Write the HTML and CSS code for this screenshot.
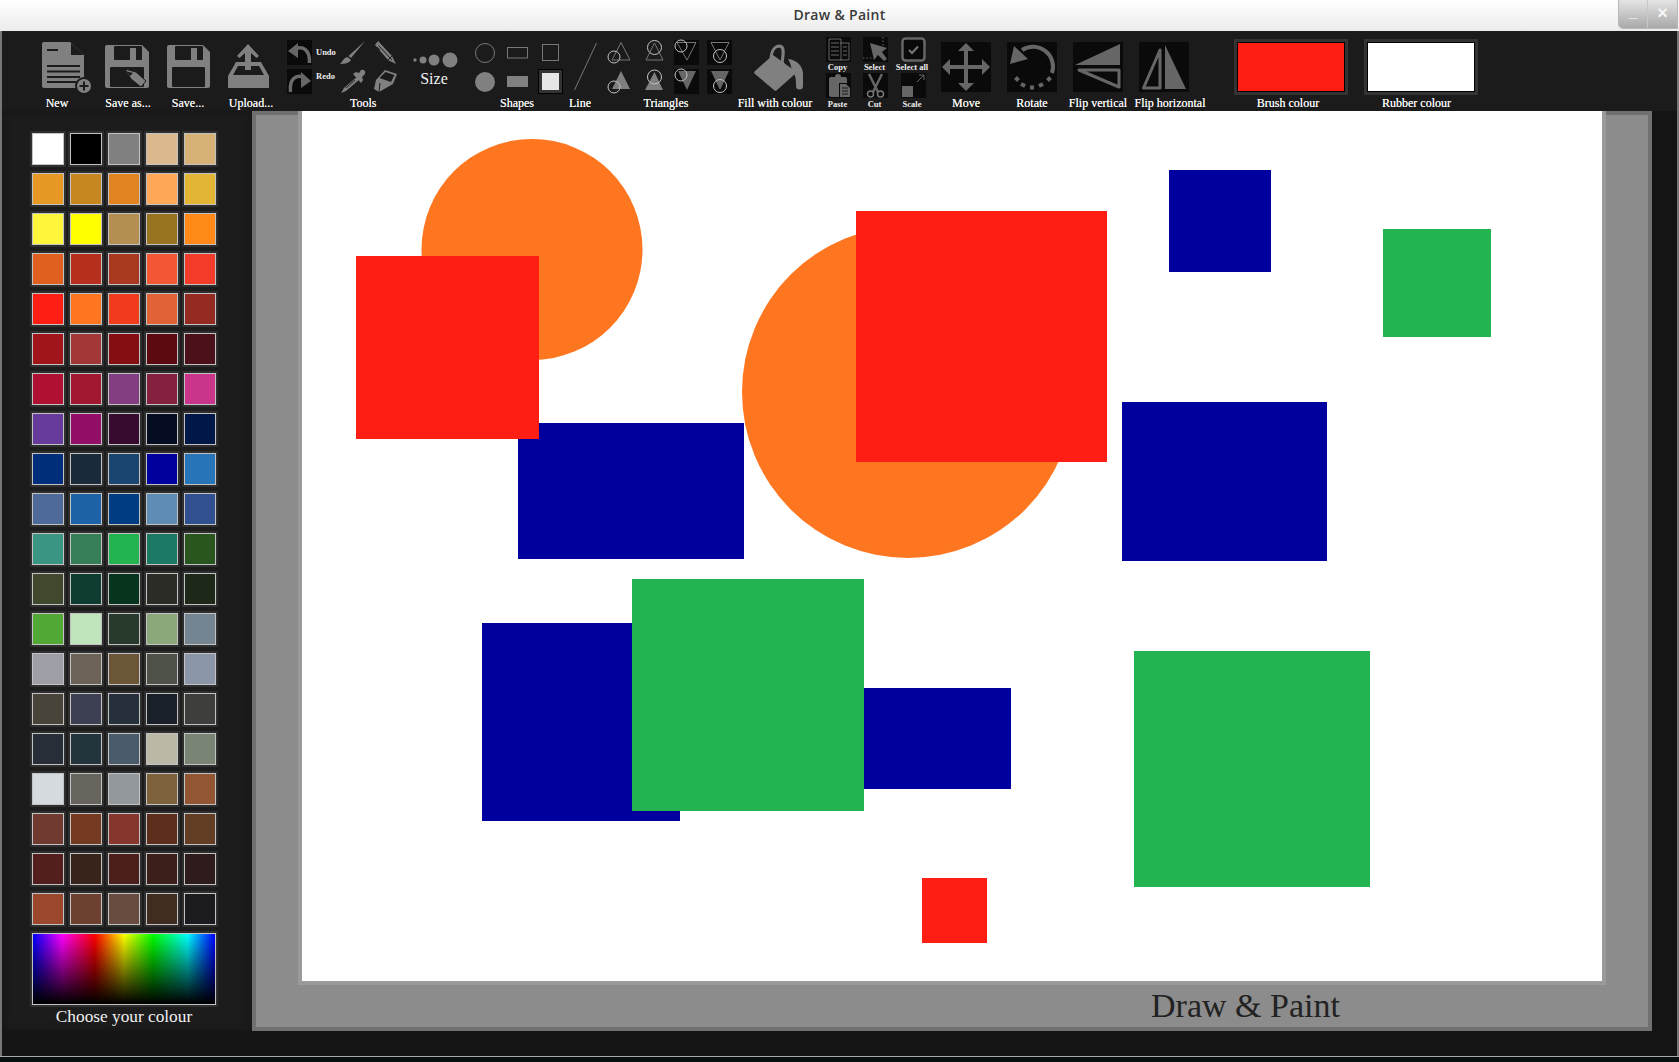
FILE: index.html
```html
<!DOCTYPE html>
<html lang="en">
<head>
<meta charset="utf-8">
<title>Draw &amp; Paint</title>
<link rel="stylesheet" href="styles.css">
</head>
<body>
<div class="window">
  <header class="titlebar">
    <span class="title">Draw &amp; Paint</span>
    <div class="winbtns"><span class="winbtn min">_</span><span class="winbtn close">×</span></div>
  </header>
  <div class="frame">
    <nav class="toolbar">
      <div class="tool g-new">
        <svg class="ico" width="70" height="60" viewBox="22 37 70 60">
          <path class="i" d="M44 42H70L84 55V86a2 2 0 0 1-2 2H44a2 2 0 0 1-2-2V44a2 2 0 0 1 2-2Z"/>
          <path class="cut" d="M71 43V55H84Z"/>
          <path class="dline" d="M47 50H58M47 66H80M47 71.500H80M47 77H80M47 82H80"/>
          <circle class="ring" cx="84" cy="86" r="8"/>
          <path class="badge" d="M79.500 86H88.500M84 81.500V90.500"/>
        </svg>
        <span class="label">New</span>
      </div>
      <div class="tool g-saveas">
        <svg class="ico" width="62" height="60" viewBox="97 37 62 60">
          <path class="i" d="M107 45H142L149 52V86a2 2 0 0 1-2 2H107a2 2 0 0 1-2-2V47a2 2 0 0 1 2-2Z"/>
          <rect class="cut" x="114" y="46" width="28" height="14" rx="1"/>
          <rect class="i" x="130" y="48" width="6" height="12"/>
          <rect class="cut" x="110" y="67" width="34" height="20" rx="1"/>
          <path class="i outl" d="M125 69L136 72L146 81L141 87L131 79Z"/>
          <path class="cut" d="M127 71.500L133 73L130 76Z"/>
        </svg>
        <span class="label">Save as...</span>
      </div>
      <div class="tool g-save">
        <svg class="ico" width="58" height="60" viewBox="159 37 58 60">
          <path class="i" d="M169 45H203L210 52V86a2 2 0 0 1-2 2H169a2 2 0 0 1-2-2V47a2 2 0 0 1 2-2Z"/>
          <rect class="cut" x="175" y="46" width="28" height="14" rx="1"/>
          <rect class="i" x="191" y="48" width="6" height="12"/>
          <rect class="cut" x="172" y="67" width="33" height="20" rx="1"/>
        </svg>
        <span class="label">Save...</span>
      </div>
      <div class="tool g-upload">
        <svg class="ico" width="68" height="60" viewBox="217 37 68 60">
          <path class="i" fill-rule="evenodd" d="M236 62H245V66H238L233 75H264L259 66H251V62H261L269 76V88H228V76Z"/>
          <path class="i" d="M248 44L259 56L256.500 58L251 53V70H245V53L239.500 58L237 56Z"/>
        </svg>
        <span class="label">Upload...</span>
      </div>
      <div class="tool g-tools">
        <div class="tools-top">
          <div class="undo-col">
            <div class="undo-row">
              <svg width="25" height="25" viewBox="287 40 25 25">
                <rect class="box" x="287" y="40" width="25" height="25"/>
                <path class="arc" d="M294 49.500C303 45 310 50 309.500 63"/>
                <path class="g2" d="M288 51L298 43V58Z"/>
              </svg>
              <span class="mini">Undo</span>
            </div>
            <div class="undo-row">
              <svg width="25" height="25" viewBox="287 69 25 25">
                <rect class="box" x="287" y="69" width="25" height="25"/>
                <path class="arc" d="M290.500 92C289 79 296 74 304 77.500"/>
                <path class="g2" d="M311 81L301 72V88Z"/>
              </svg>
              <span class="mini up">Redo</span>
            </div>
          </div>
          <svg class="ico" width="60" height="60" viewBox="338 37 60 60">
            <path class="i" d="M365 41L351 58L348.500 56Z"/>
            <path class="i" d="M347.500 57L351 60C349 63 345 64 340 64C342.500 62 343 58 347.500 57Z"/>
            <path class="i" d="M375 45L378 41L392 56L396 64L388 60Z"/>
            <path class="dthin" d="M380 50L377 47M378.500 45.500L392 60M388 60L392 56"/>
            <path class="i" d="M358 76L344 88L341 93L346 91L360 79L358 76Z"/>
            <path class="dthin" d="M355 80L346 88"/>
            <path class="i" d="M353 74L356 72L359 73L361 70A3 3 0 0 1 365 74L362 77L363 80L361 83Z"/>
            <path class="i" d="M385 70L397 74L393 84L379 92L374 89L376 80Z"/>
            <path class="cut" d="M385.500 72L394.500 75L391 82L379.500 78Z"/>
            <path class="dthin" d="M379 92L380 83"/>
          </svg>
        </div>
        <span class="label tools-label">Tools</span>
      </div>
      <div class="tool g-size">
        <svg width="58" height="32" viewBox="405 37 58 32">
          <circle class="i" cx="415" cy="60" r="1.700"/>
          <circle class="i" cx="423" cy="60" r="3.500"/>
          <circle class="i" cx="434" cy="60" r="5.500"/>
          <circle class="i" cx="450" cy="60" r="7.500"/>
        </svg>
        <span class="size-text">Size</span>
      </div>
      <div class="tool g-shapes">
        <svg class="ico" width="89" height="60" viewBox="474 37 89 60">
          <circle class="line" cx="485" cy="53" r="9.500"/>
          <circle class="i" cx="485" cy="82" r="10"/>
          <rect class="line" x="507.500" y="47.500" width="20" height="10.500"/>
          <rect class="i" x="507" y="76" width="21" height="11"/>
          <rect class="line" x="542.500" y="44.500" width="16" height="16"/>
          <rect class="sel" x="538.500" y="69.500" width="24" height="24"/>
          <rect class="sel-in" x="542" y="73" width="17" height="17"/>
        </svg>
        <span class="label shift-l">Shapes</span>
      </div>
      <div class="tool g-line">
        <svg class="ico" width="34" height="60" viewBox="563 37 34 60">
          <path class="line" d="M574.500 90L596.500 43"/>
        </svg>
        <span class="label">Line</span>
      </div>
      <div class="tool g-tri">
        <svg class="ico" width="130" height="60" viewBox="605 37 130 60">
          <rect class="box" x="674" y="40" width="25" height="25"/>
          <rect class="box" x="674" y="69" width="25" height="25"/>
          <rect class="box" x="707" y="40" width="25" height="25"/>
          <rect class="box" x="707" y="69" width="25" height="25"/>
          <path class="line" d="M621 42.500L612 60H630Z"/>
          <path class="i" d="M621 71L612 89H630Z"/>
          <circle class="hoop" cx="614" cy="57" r="6"/>
          <circle class="hoop" cx="614" cy="87" r="6"/>
          <path class="line" d="M654.500 43L646 60H663Z"/>
          <path class="i" d="M654.500 72L645 90H663Z"/>
          <circle class="hoop" cx="654.500" cy="47.500" r="7"/>
          <circle class="hoop" cx="654.500" cy="77" r="7"/>
          <path class="line" d="M677 42.500H696L687 60Z"/>
          <path class="g2" d="M678 71H696L687 90Z"/>
          <circle class="hoop" cx="681" cy="46" r="6"/>
          <circle class="hoop" cx="681" cy="75" r="6"/>
          <path class="line" d="M711 42.500H729L720 60Z"/>
          <path class="g2" d="M711 71H729L720 90Z"/>
          <circle class="hoop" cx="720" cy="56" r="6.500"/>
          <circle class="hoop" cx="720" cy="86" r="6.500"/>
        </svg>
        <span class="label shift-t">Triangles</span>
      </div>
      <div class="tool g-fill">
        <svg class="ico" width="80" height="60" viewBox="735 37 80 60">
          <path class="i" d="M755 71L773 55L795 71A2 2 0 0 1 795 74L777 90A2 2 0 0 1 774 90L755 74A2 2 0 0 1 755 71Z"/>
          <path class="arc-l" d="M771 60C771 49 776 46 780 46C785 47 783 56 782 63"/>
          <circle class="i" cx="782" cy="64" r="2.500"/>
          <path class="i" d="M788 59C797 60 803 66 803 74V86A3.500 3.500 0 0 1 796 86C796 80 796 75 792 71C791 66 790 62 788 59Z"/>
        </svg>
        <span class="label">Fill with colour</span>
      </div>
      <div class="tool g-clip">
        <div class="clip-grid">
          <div class="clip-cell">
            <svg width="25" height="25" viewBox="0 0 25 25">
              <rect class="box" width="25" height="25"/>
              <path class="line2" d="M14 6H23V23H14M3 2H15V23H3ZM5 6H13M5 10H13M5 14H13M5 18H13M17 10H21M17 14H21M17 18H21"/>
            </svg>
            <span class="mini">Copy</span>
          </div>
          <div class="clip-cell">
            <svg width="25" height="25" viewBox="0 0 25 25">
              <rect class="box" width="25" height="25"/>
              <path class="dots" d="M20 0V13M0 21H14"/>
              <path class="g2" d="M7 6L24 11L19 15L24 22L21 24L15 18L11 23Z"/>
            </svg>
            <span class="mini">Select</span>
          </div>
          <div class="clip-cell">
            <svg width="25" height="25" viewBox="0 0 25 25">
              <rect class="sa" x="1.500" y="1.500" width="22" height="22" rx="3"/>
              <path class="chk" d="M8 13L11 16L17 9.500"/>
            </svg>
            <span class="mini">Select all</span>
          </div>
          <div class="clip-cell">
            <svg width="25" height="25" viewBox="0 0 25 25">
              <rect class="box" width="25" height="25"/>
              <path class="g2" d="M3 6A2 2 0 0 1 5 4H9A3 3 0 0 1 15 4H19A2 2 0 0 1 21 6V10H13V24H5A2 2 0 0 1 3 22Z"/>
              <path class="g2" d="M14 11H20L24 15V24H14Z"/>
              <path class="dthin" d="M16 15H22M16 18H22M16 21H22"/>
            </svg>
            <span class="mini last">Paste</span>
          </div>
          <div class="clip-cell">
            <svg width="25" height="25" viewBox="0 0 25 25">
              <rect class="box" width="25" height="25"/>
              <path class="blade" d="M6 1L15 19M19 1L10 19"/>
              <circle class="sc" cx="7.500" cy="21" r="3"/>
              <circle class="sc" cx="17.500" cy="21" r="3"/>
            </svg>
            <span class="mini last">Cut</span>
          </div>
          <div class="clip-cell">
            <svg width="25" height="25" viewBox="0 0 25 25">
              <rect class="box" width="25" height="25"/>
              <rect class="g2" x="1" y="13" width="11" height="11"/>
              <path class="line2" d="M16 9L23 2M18 2H23V7"/>
            </svg>
            <span class="mini last">Scale</span>
          </div>
        </div>
      </div>
      <div class="tool g-move">
        <svg class="ico" width="50" height="60" viewBox="941 37 50 60">
          <rect class="box" x="941" y="42" width="50" height="50"/>
          <path class="g2" d="M966 43L974 51H968V65H982V59L990 67L982 75V69H968V83H974L966 91L958 83H964V69H950V75L942 67L950 59V65H964V51H958Z"/>
        </svg>
        <span class="label nudge">Move</span>
      </div>
      <div class="tool g-rotate">
        <svg class="ico" width="50" height="60" viewBox="1007 37 50 60">
          <rect class="box" x="1007" y="42" width="50" height="50"/>
          <path class="rot" d="M1022 50A20 20 0 0 1 1052 73"/>
          <path class="g2" d="M1010 64L1014 46L1028 59Z"/>
          <path class="rdots" d="M1015.500 77.500L1018.500 80.500M1021 84L1025 86M1030 87.500H1034M1039 86L1043 84M1047.500 80.500L1050.500 77.500"/>
        </svg>
        <span class="label nudge">Rotate</span>
      </div>
      <div class="tool g-flipv">
        <svg class="ico" width="62" height="60" viewBox="1067 37 62 60">
          <rect class="box" x="1073" y="42" width="50" height="50"/>
          <path class="g2" d="M1075 65L1120 44V65Z"/>
          <path class="flip" d="M1079 70H1119V87Z"/>
        </svg>
        <span class="label">Flip vertical</span>
      </div>
      <div class="tool g-fliph">
        <svg class="ico" width="70" height="60" viewBox="1135 37 70 60">
          <rect class="box" x="1139" y="42" width="50" height="50"/>
          <path class="flip" d="M1160 50V88H1143.500Z"/>
          <path class="g2" d="M1165 45L1186 89H1165Z"/>
        </svg>
        <span class="label">Flip horizontal</span>
      </div>
      <div class="tool g-brush">
        <div class="colour-box"><div class="colour red"></div></div>
        <span class="label shift-b">Brush colour</span>
      </div>
      <div class="tool g-rubber">
        <div class="colour-box"><div class="colour white"></div></div>
        <span class="label shift-r">Rubber colour</span>
      </div>
    </nav>
    <div class="main">
      <aside class="sidebar">
        <div class="palette">
          <div class="sw"><i style="background:#fff"></i></div><div class="sw"><i style="background:#000"></i></div><div class="sw"><i style="background:#808080"></i></div><div class="sw"><i style="background:#dbb98c"></i></div><div class="sw"><i style="background:#d7b176"></i></div>
          <div class="sw"><i style="background:#e69a25"></i></div><div class="sw"><i style="background:#c68720"></i></div><div class="sw"><i style="background:#e18321"></i></div><div class="sw"><i style="background:#ffa858"></i></div><div class="sw"><i style="background:#e3b534"></i></div>
          <div class="sw"><i style="background:#fff63c"></i></div><div class="sw"><i style="background:#ffff00"></i></div><div class="sw"><i style="background:#b58e52"></i></div><div class="sw"><i style="background:#997420"></i></div><div class="sw"><i style="background:#ff8a17"></i></div>
          <div class="sw"><i style="background:#e06020"></i></div><div class="sw"><i style="background:#b72f1f"></i></div><div class="sw"><i style="background:#a93920"></i></div><div class="sw"><i style="background:#f45736"></i></div><div class="sw"><i style="background:#f33c2a"></i></div>
          <div class="sw"><i style="background:#ff1e14"></i></div><div class="sw"><i style="background:#ff7620"></i></div><div class="sw"><i style="background:#f03c1c"></i></div><div class="sw"><i style="background:#e06236"></i></div><div class="sw"><i style="background:#952a22"></i></div>
          <div class="sw"><i style="background:#a0151a"></i></div><div class="sw"><i style="background:#a23738"></i></div><div class="sw"><i style="background:#850e12"></i></div><div class="sw"><i style="background:#5c0a10"></i></div><div class="sw"><i style="background:#4c101a"></i></div>
          <div class="sw"><i style="background:#b01133"></i></div><div class="sw"><i style="background:#a0172f"></i></div><div class="sw"><i style="background:#823e80"></i></div><div class="sw"><i style="background:#85213f"></i></div><div class="sw"><i style="background:#c8358a"></i></div>
          <div class="sw"><i style="background:#663b9c"></i></div><div class="sw"><i style="background:#920e67"></i></div><div class="sw"><i style="background:#370a30"></i></div><div class="sw"><i style="background:#040d21"></i></div><div class="sw"><i style="background:#001748"></i></div>
          <div class="sw"><i style="background:#002e7a"></i></div><div class="sw"><i style="background:#1a2a3a"></i></div><div class="sw"><i style="background:#194570"></i></div><div class="sw"><i style="background:#00009f"></i></div><div class="sw"><i style="background:#2874b8"></i></div>
          <div class="sw"><i style="background:#4e6a9a"></i></div><div class="sw"><i style="background:#1e62a8"></i></div><div class="sw"><i style="background:#003c82"></i></div><div class="sw"><i style="background:#5f8cb4"></i></div><div class="sw"><i style="background:#305090"></i></div>
          <div class="sw"><i style="background:#3a9682"></i></div><div class="sw"><i style="background:#367e58"></i></div><div class="sw"><i style="background:#23b350"></i></div><div class="sw"><i style="background:#1c7a64"></i></div><div class="sw"><i style="background:#28561e"></i></div>
          <div class="sw"><i style="background:#40482e"></i></div><div class="sw"><i style="background:#0e3c30"></i></div><div class="sw"><i style="background:#06341c"></i></div><div class="sw"><i style="background:#2c2c26"></i></div><div class="sw"><i style="background:#1e2818"></i></div>
          <div class="sw"><i style="background:#52a835"></i></div><div class="sw"><i style="background:#c0e4bc"></i></div><div class="sw"><i style="background:#283a2c"></i></div><div class="sw"><i style="background:#8aa87a"></i></div><div class="sw"><i style="background:#748490"></i></div>
          <div class="sw"><i style="background:#9e9ea6"></i></div><div class="sw"><i style="background:#6c6258"></i></div><div class="sw"><i style="background:#6c5638"></i></div><div class="sw"><i style="background:#4e5248"></i></div><div class="sw"><i style="background:#8a96a8"></i></div>
          <div class="sw"><i style="background:#48443a"></i></div><div class="sw"><i style="background:#3c4052"></i></div><div class="sw"><i style="background:#26303c"></i></div><div class="sw"><i style="background:#1a2028"></i></div><div class="sw"><i style="background:#3e3e3c"></i></div>
          <div class="sw"><i style="background:#282e38"></i></div><div class="sw"><i style="background:#24343c"></i></div><div class="sw"><i style="background:#4a5c6c"></i></div><div class="sw"><i style="background:#bcb8a8"></i></div><div class="sw"><i style="background:#7a8474"></i></div>
          <div class="sw"><i style="background:#d4dade"></i></div><div class="sw"><i style="background:#66645c"></i></div><div class="sw"><i style="background:#92989c"></i></div><div class="sw"><i style="background:#7e623c"></i></div><div class="sw"><i style="background:#925632"></i></div>
          <div class="sw"><i style="background:#703a30"></i></div><div class="sw"><i style="background:#743a22"></i></div><div class="sw"><i style="background:#86362c"></i></div><div class="sw"><i style="background:#5e2e1c"></i></div><div class="sw"><i style="background:#643e24"></i></div>
          <div class="sw"><i style="background:#521e1e"></i></div><div class="sw"><i style="background:#38241a"></i></div><div class="sw"><i style="background:#4c1e1c"></i></div><div class="sw"><i style="background:#3c1e1a"></i></div><div class="sw"><i style="background:#2e1c1c"></i></div>
          <div class="sw"><i style="background:#9c482c"></i></div><div class="sw"><i style="background:#6e4030"></i></div><div class="sw"><i style="background:#684c40"></i></div><div class="sw"><i style="background:#402c20"></i></div><div class="sw"><i style="background:#1c1c20"></i></div>
        </div>
        <div class="picker"><div class="spectrum"></div></div>
        <p class="picker-cap">Choose your colour</p>
      </aside>
      <section class="stage">
        <svg class="canvas" viewBox="302 111 1300 870">
          <circle class="orange" cx="532" cy="249.500" r="110.500"/>
          <circle class="orange" cx="908" cy="392" r="166"/>
          <rect class="blue" x="518" y="423" width="226" height="136"/>
          <rect class="red" x="356" y="256" width="183" height="183"/>
          <rect class="red" x="856" y="211" width="251" height="251"/>
          <rect class="blue" x="1169" y="170" width="102" height="102"/>
          <rect class="green" x="1383" y="229" width="108" height="108"/>
          <rect class="blue" x="1122" y="402" width="205" height="159"/>
          <rect class="blue" x="482" y="623" width="198" height="198"/>
          <rect class="blue" x="700" y="688" width="311" height="101"/>
          <rect class="green" x="632" y="579" width="232" height="232"/>
          <rect class="green" x="1134" y="651" width="236" height="236"/>
          <rect class="red" x="922" y="878" width="65" height="65"/>
        </svg>
        <p class="brand">Draw &amp; Paint</p>
      </section>
      <div class="gutter"></div>
    </div>
    <div class="statusbar"></div>
  </div>
</div>
</body>
</html>
```

FILE: styles.css
```css
* { box-sizing: border-box; }
html, body { margin: 0; padding: 0; }
body {
  width: 1679px;
  height: 1062px;
  overflow: hidden;
  background: #06110f;
  font-family: "Liberation Serif", serif;
}
.window { height: 1057px; display: flex; flex-direction: column; border-bottom: 1px solid #a8a8a8; }
.titlebar {
  position: relative;
  flex: 0 0 31px;
  display: flex;
  align-items: center;
  justify-content: center;
  padding-bottom: 2px;
  background: linear-gradient(#ffffff, #ececec);
}
.title { font: 600 14px "Open Sans", sans-serif; color: #3a3a3a; letter-spacing: .3px; }
.winbtns {
  position: absolute;
  top: 0;
  right: 1px;
  display: flex;
  height: 29px;
  border-radius: 0 0 0 5px;
  overflow: hidden;
  border: 1px solid #b8b8b8;
  border-top: 0;
}
.winbtn {
  width: 29px;
  display: flex;
  align-items: center;
  justify-content: center;
  background: linear-gradient(#e4e4e4, #a9a9a9);
  color: #fff;
  font: 700 15px "Liberation Sans", sans-serif;
}
.winbtn.min { border-right: 1px solid #c8c8c8; padding-bottom: 6px; }
.winbtn.close { font-size: 18px; padding-bottom: 2px; color: #f6f6f6; }
.frame {
  flex: 1;
  display: flex;
  flex-direction: column;
  border-left: 2px solid #777;
  border-right: 2px solid #777;
}
.toolbar { flex: 0 0 80px; display: flex; background: #1b1b1b; }
.tool {
  height: 80px;
  padding-top: 6px;
  display: flex;
  flex-direction: column;
  align-items: center;
  flex: none;
}
.ico { display: block; flex: none; }
.label {
  margin-top: auto;
  padding-bottom: 1px;
  font-size: 12px;
  line-height: 13px;
  color: #f0f0f0;
  white-space: nowrap;
  text-shadow: 0 0 .6px #fff;
}
.mini {
  font-size: 8.500px;
  font-weight: 700;
  line-height: 11px;
  color: #eee;
  white-space: nowrap;
}
.g-new { margin-left: 20px; width: 70px; }
.g-saveas { margin-left: 5px; width: 62px; }
.g-save { width: 58px; }
.g-upload { width: 68px; }
.g-tools { margin-left: 2px; width: 111px; align-items: flex-start; }
.g-size { margin-left: 7px; width: 58px; }
.g-shapes { margin-left: 11px; width: 89px; }
.g-line { width: 34px; }
.g-tri { margin-left: 8px; width: 130px; }
.g-fill { width: 80px; }
.g-clip { margin-left: 5px; width: 112px; }
.g-move { margin-left: 9px; width: 50px; }
.g-rotate { margin-left: 16px; width: 50px; }
.g-flipv { margin-left: 10px; width: 62px; }
.g-fliph { margin-left: 6px; width: 70px; }
.g-brush { margin-left: 29px; width: 114px; }
.g-rubber { margin-left: 16px; width: 114px; }
.tools-top { display: flex; }
.undo-col { width: 51px; padding-top: 3px; display: flex; flex-direction: column; gap: 4px; }
.undo-row { display: flex; align-items: center; gap: 4px; height: 25px; }
.undo-row svg { display: block; flex: none; }
.mini.up { align-self: flex-start; margin-top: 2px; }
.tools-label { margin-left: 63px; }
.size-text { margin-top: 1px; font-size: 16px; line-height: 18px; color: #f2f2f2; }
.shift-l { margin-right: 3px; }
.shift-t { margin-right: 8px; }
.shift-b { margin-right: 6px; }
.shift-r { margin-right: 9px; }
.nudge { margin-left: 0; }
.clip-grid { display: grid; grid-template-columns: 37px 37px 38px; grid-template-rows: 36px 37px; }
.clip-cell { display: flex; flex-direction: column; align-items: center; }
.clip-cell svg { display: block; flex: none; }
.clip-cell .mini { margin-right: 2px; }
.mini.last { line-height: 12px; }
.colour-box { margin-top: 2px; width: 114px; height: 56px; border: 3px solid #333; }
.colour { height: 100%; border: 1px solid #000; }
.colour.red { background: #ff1e14; }
.colour.white { background: #fff; }

/* icon paint */
svg .i { fill: #808080; }
svg .g2 { fill: #666; }
svg .cut { fill: #1b1b1b; }
svg .outl { stroke: #1b1b1b; stroke-width: 1; }
svg .box { fill: #0a0a0a; }
svg .dline { fill: none; stroke: #1b1b1b; stroke-width: 2; }
svg .dthin { fill: none; stroke: #1b1b1b; stroke-width: 1; }
svg .ring { fill: #808080; stroke: #1b1b1b; stroke-width: 2; }
svg .badge { fill: none; stroke: #1b1b1b; stroke-width: 2; }
svg .arc { fill: none; stroke: #6a6a6a; stroke-width: 3.500; }
svg .arc-l { fill: none; stroke: #808080; stroke-width: 3; }
svg .line { fill: none; stroke: #777; stroke-width: 1; }
svg .line2 { fill: none; stroke: #666; stroke-width: 1; }
svg .hoop { fill: none; stroke: #c4c4c4; stroke-width: 1; }
svg .sel { fill: #333; stroke: #000; stroke-width: 1; }
svg .sel-in { fill: #e6e6e6; }
svg .dots { fill: none; stroke: #666; stroke-width: 1; stroke-dasharray: 1.500 2; }
svg .sa { fill: #0a0a0a; stroke: #666; stroke-width: 2.500; }
svg .chk { fill: none; stroke: #777; stroke-width: 2; }
svg .blade { fill: none; stroke: #666; stroke-width: 2.500; }
svg .sc { fill: none; stroke: #777; stroke-width: 1.500; }
svg .rot { fill: none; stroke: #666; stroke-width: 4; }
svg .rdots { fill: none; stroke: #666; stroke-width: 4; }
svg .flip { fill: none; stroke: #666; stroke-width: 3; stroke-linejoin: round; }

.main { flex: 0 0 920px; display: flex; }
.sidebar {
  width: 250px;
  flex: none;
  padding: 20px 0 0 28px;
  background: #1c1c1c;
  box-shadow: inset 0 0 10px #151515;
}
.palette { display: grid; grid-template-columns: repeat(5, 36px); grid-auto-rows: 36px; column-gap: 2px; row-gap: 4px; }
.sw { background: #2f2f2f; padding: 2px; }
.sw i { display: block; height: 100%; border: 1px solid #c2c2c2; }
.picker { margin-top: 4px; width: 188px; height: 76px; padding: 2px; background: #2f2f2f; }
.spectrum {
  height: 100%;
  border: 1px solid #c2c2c2;
  background:
    linear-gradient(to bottom, rgba(0,0,0,0), #000),
    linear-gradient(to right, #00f, #f0f 16%, #f00 34%, #ff0 50%, #0f0 66%, #0ff 85%, #00f);
}
.picker-cap { margin: 0; width: 188px; text-align: center; font-size: 17.300px; line-height: 20px; color: #f0f0f0; }
.stage {
  width: 1400px;
  flex: none;
  background: #8c8c8c;
  border: 4px solid #707070;
  padding-left: 42px;
}
.canvas {
  display: block;
  width: 1308px;
  height: 874px;
  margin-top: -4px;
  background: #fff;
  border-style: solid;
  border-color: #9a9a9a;
  border-width: 0 4px 4px;
}
.brand { margin: 0 0 0 853px; font-size: 34px; line-height: 42px; color: #222; white-space: nowrap; }
.gutter { flex: 1; background: #141414; }
.statusbar { flex: 1; background: #141414; }
.orange { fill: #ff7620; }
.red { fill: #ff1e14; }
.blue { fill: #00009f; }
.green { fill: #23b350; }
```
